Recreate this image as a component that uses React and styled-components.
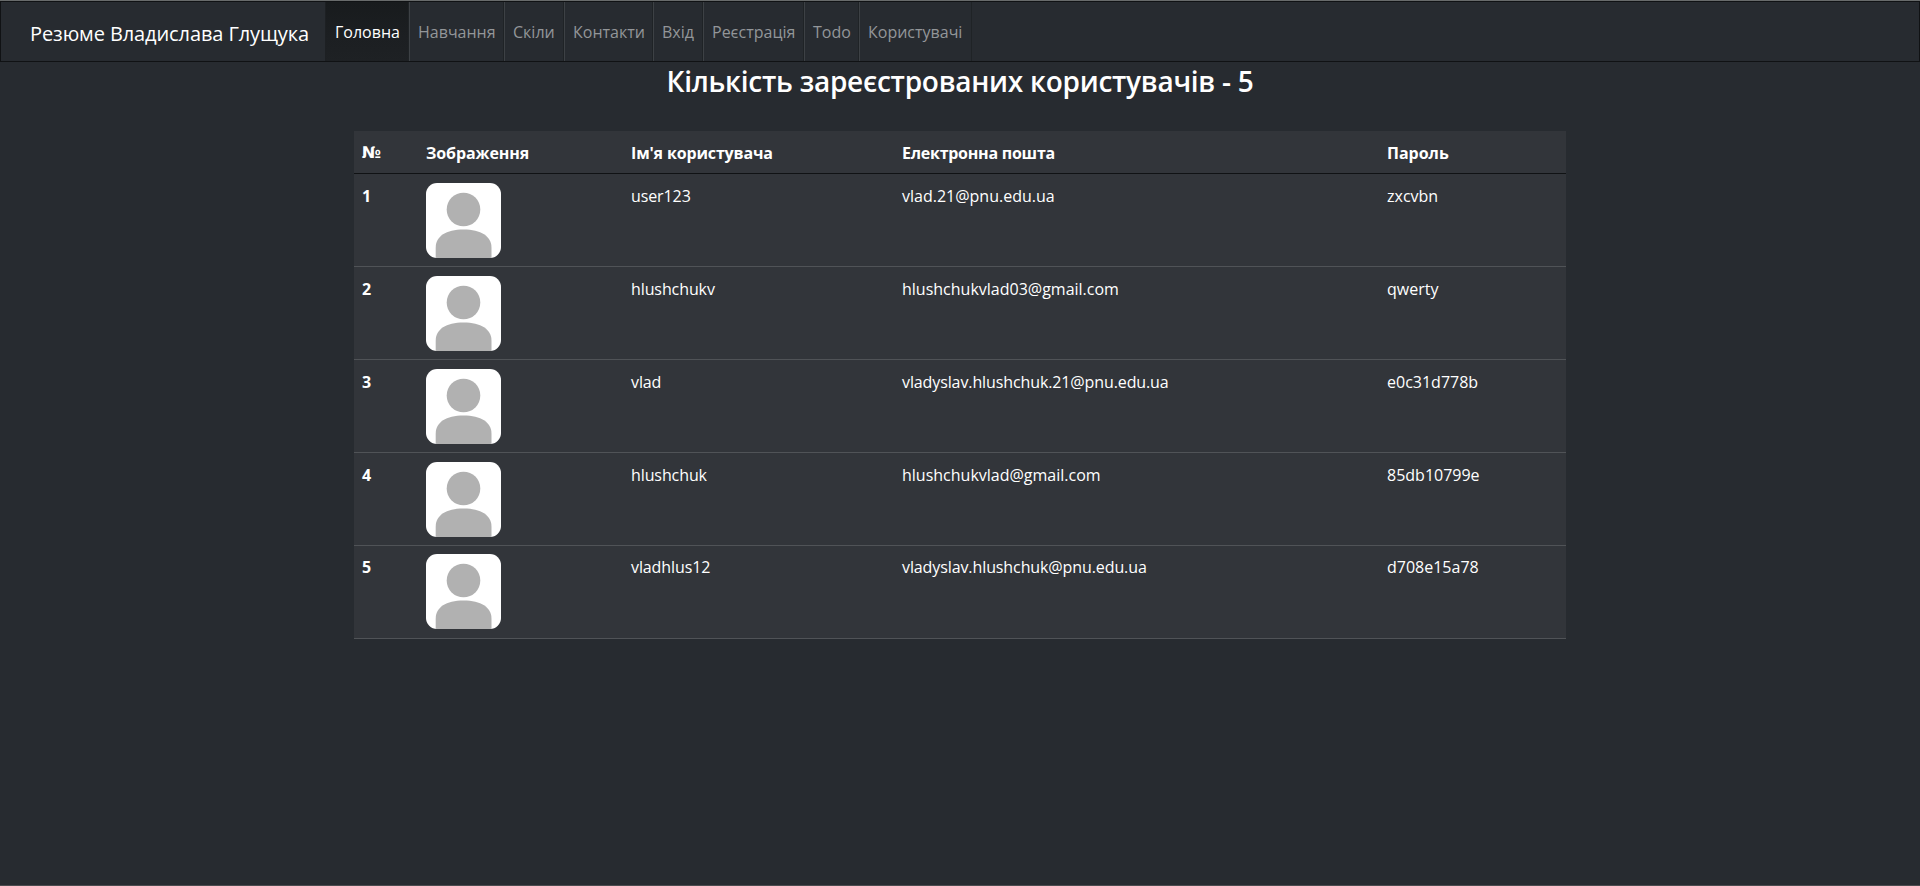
import React from 'react';
import styled, { createGlobalStyle } from 'styled-components';

const GlobalStyle = createGlobalStyle`
  *, *::before, *::after { box-sizing: border-box; }
  body {
    margin: 0;
    background: #272b30;
    color: #fff;
    font-family: "Open Sans", "Noto Sans", sans-serif;
    font-size: 16px;
    line-height: 26px;
  }
`;

const Page = styled.div`
  height: 886px;
  overflow: hidden;
  border-top: 1px solid #686b6b;
  border-bottom: 1px solid #4b4c4f;
`;

const Navbar = styled.nav`
  display: flex;
  height: 61px;
  padding-left: 29px;
  border: 1px solid #101214;
`;

const Brand = styled.a`
  flex: none;
  width: 295px;
  padding-top: 19px;
  font-size: 20px;
  letter-spacing: -0.1px;
  white-space: nowrap;
  color: #fff;
`;

const NavList = styled.ul`
  display: flex;
  margin: 0;
  padding: 0;
  list-style: none;
  border-left: 1px solid #1d2023;
`;

const NavItem = styled.li`
  width: ${({ $width }) => $width}px;
  padding: 17px 0 0 ${({ $active }) => ($active ? 9 : 8)}px;
  white-space: nowrap;
  color: ${({ $active }) => ($active ? '#fff' : '#939699')};
  background: ${({ $active }) =>
    $active ? 'linear-gradient(#181b1d, #1c1f22 60%, #1e2124)' : 'transparent'};
  border-left: ${({ $active }) => ($active ? '0' : '1px solid #3d4145')};
  border-right: 1px solid #1f2326;
`;

const Title = styled.h2`
  margin: 0;
  padding-top: 2px;
  height: 69px;
  font-size: 28px;
  font-weight: 600;
  line-height: 34px;
  letter-spacing: -0.26px;
  text-align: center;
`;

const Table = styled.table`
  width: 1212px;
  margin: 0 auto;
  table-layout: fixed;
  border-spacing: 0;
  background: #32353a;
  text-align: left;
`;

const Col = styled.col`
  width: ${({ $width }) => $width}px;
`;

const HeadCell = styled.th`
  height: 43px;
  padding: 9px 8px 7px;
  font-weight: 700;
  letter-spacing: ${({ $spacing = 0 }) => $spacing}px;
  border-bottom: 1px solid #101214;
`;

const NumeroSign = styled.span`
  display: block;
  font-family: "DejaVu Sans", sans-serif;
  font-size: 16px;
`;

const Cell = styled.td`
  height: 93px;
  padding: 9px 8px 8px;
  vertical-align: top;
  font-weight: ${({ $strong }) => ($strong ? 700 : 400)};
  letter-spacing: ${({ $spacing = 0 }) => $spacing}px;
  border-bottom: 1px solid #505357;
`;

const Row = styled.tr`
  &:last-child ${Cell} {
    padding-top: 8px;
  }
`;

const Avatar = styled.svg`
  display: block;
  width: 75px;
  height: 75px;
  border-radius: 11px;
  background: #fff;
`;

const links = [
  { label: 'Головна', width: 83, active: true },
  { label: 'Навчання', width: 95 },
  { label: 'Скіли', width: 60 },
  { label: 'Контакти', width: 89 },
  { label: 'Вхід', width: 50 },
  { label: 'Реєстрація', width: 101 },
  { label: 'Todo', width: 55 },
  { label: 'Користувачі', width: 113 },
];

const users = [
  { name: 'user123', email: 'vlad.21@pnu.edu.ua', password: 'zxcvbn' },
  { name: 'hlushchukv', email: 'hlushchukvlad03@gmail.com', password: 'qwerty' },
  { name: 'vlad', email: 'vladyslav.hlushchuk.21@pnu.edu.ua', password: 'e0c31d778b', spacing: -0.11 },
  { name: 'hlushchuk', email: 'hlushchukvlad@gmail.com', password: '85db10799e' },
  { name: 'vladhlus12', email: 'vladyslav.hlushchuk@pnu.edu.ua', password: 'd708e15a78', spacing: -0.1 },
];

function UserAvatar() {
  return (
    <Avatar viewBox="0 0 75 75" aria-hidden="true">
      <circle cx="37.5" cy="26.5" r="16.8" fill="#b1b1b1" />
      <path d="M9.7 75V64.5C9.7 53.5 20 46.6 37.5 46.6S65.5 53.5 65.5 64.5V75Z" fill="#b1b1b1" />
    </Avatar>
  );
}

export default function App() {
  return (
    <>
      <GlobalStyle />
      <Page>
        <Navbar>
          <Brand>Резюме Владислава Глущука</Brand>
          <NavList>
            {links.map(({ label, width, active }) => (
              <NavItem key={label} $width={width} $active={active}>{label}</NavItem>
            ))}
          </NavList>
        </Navbar>
        <Title>Кількість зареєстрованих користувачів - {users.length}</Title>
        <Table>
          <colgroup>
            <Col $width={64} />
            <Col $width={205} />
            <Col $width={271} />
            <Col $width={485} />
            <Col $width={187} />
          </colgroup>
          <thead>
            <tr>
              <HeadCell><NumeroSign>№</NumeroSign></HeadCell>
              <HeadCell $spacing={-0.1}>Зображення</HeadCell>
              <HeadCell $spacing={-0.15}>Ім'я користувача</HeadCell>
              <HeadCell $spacing={-0.25}>Електронна пошта</HeadCell>
              <HeadCell>Пароль</HeadCell>
            </tr>
          </thead>
          <tbody>
            {users.map((user, i) => (
              <Row key={user.name}>
                <Cell $strong>{i + 1}</Cell>
                <Cell><UserAvatar /></Cell>
                <Cell $spacing={-0.1}>{user.name}</Cell>
                <Cell $spacing={user.spacing}>{user.email}</Cell>
                <Cell>{user.password}</Cell>
              </Row>
            ))}
          </tbody>
        </Table>
      </Page>
    </>
  );
}
